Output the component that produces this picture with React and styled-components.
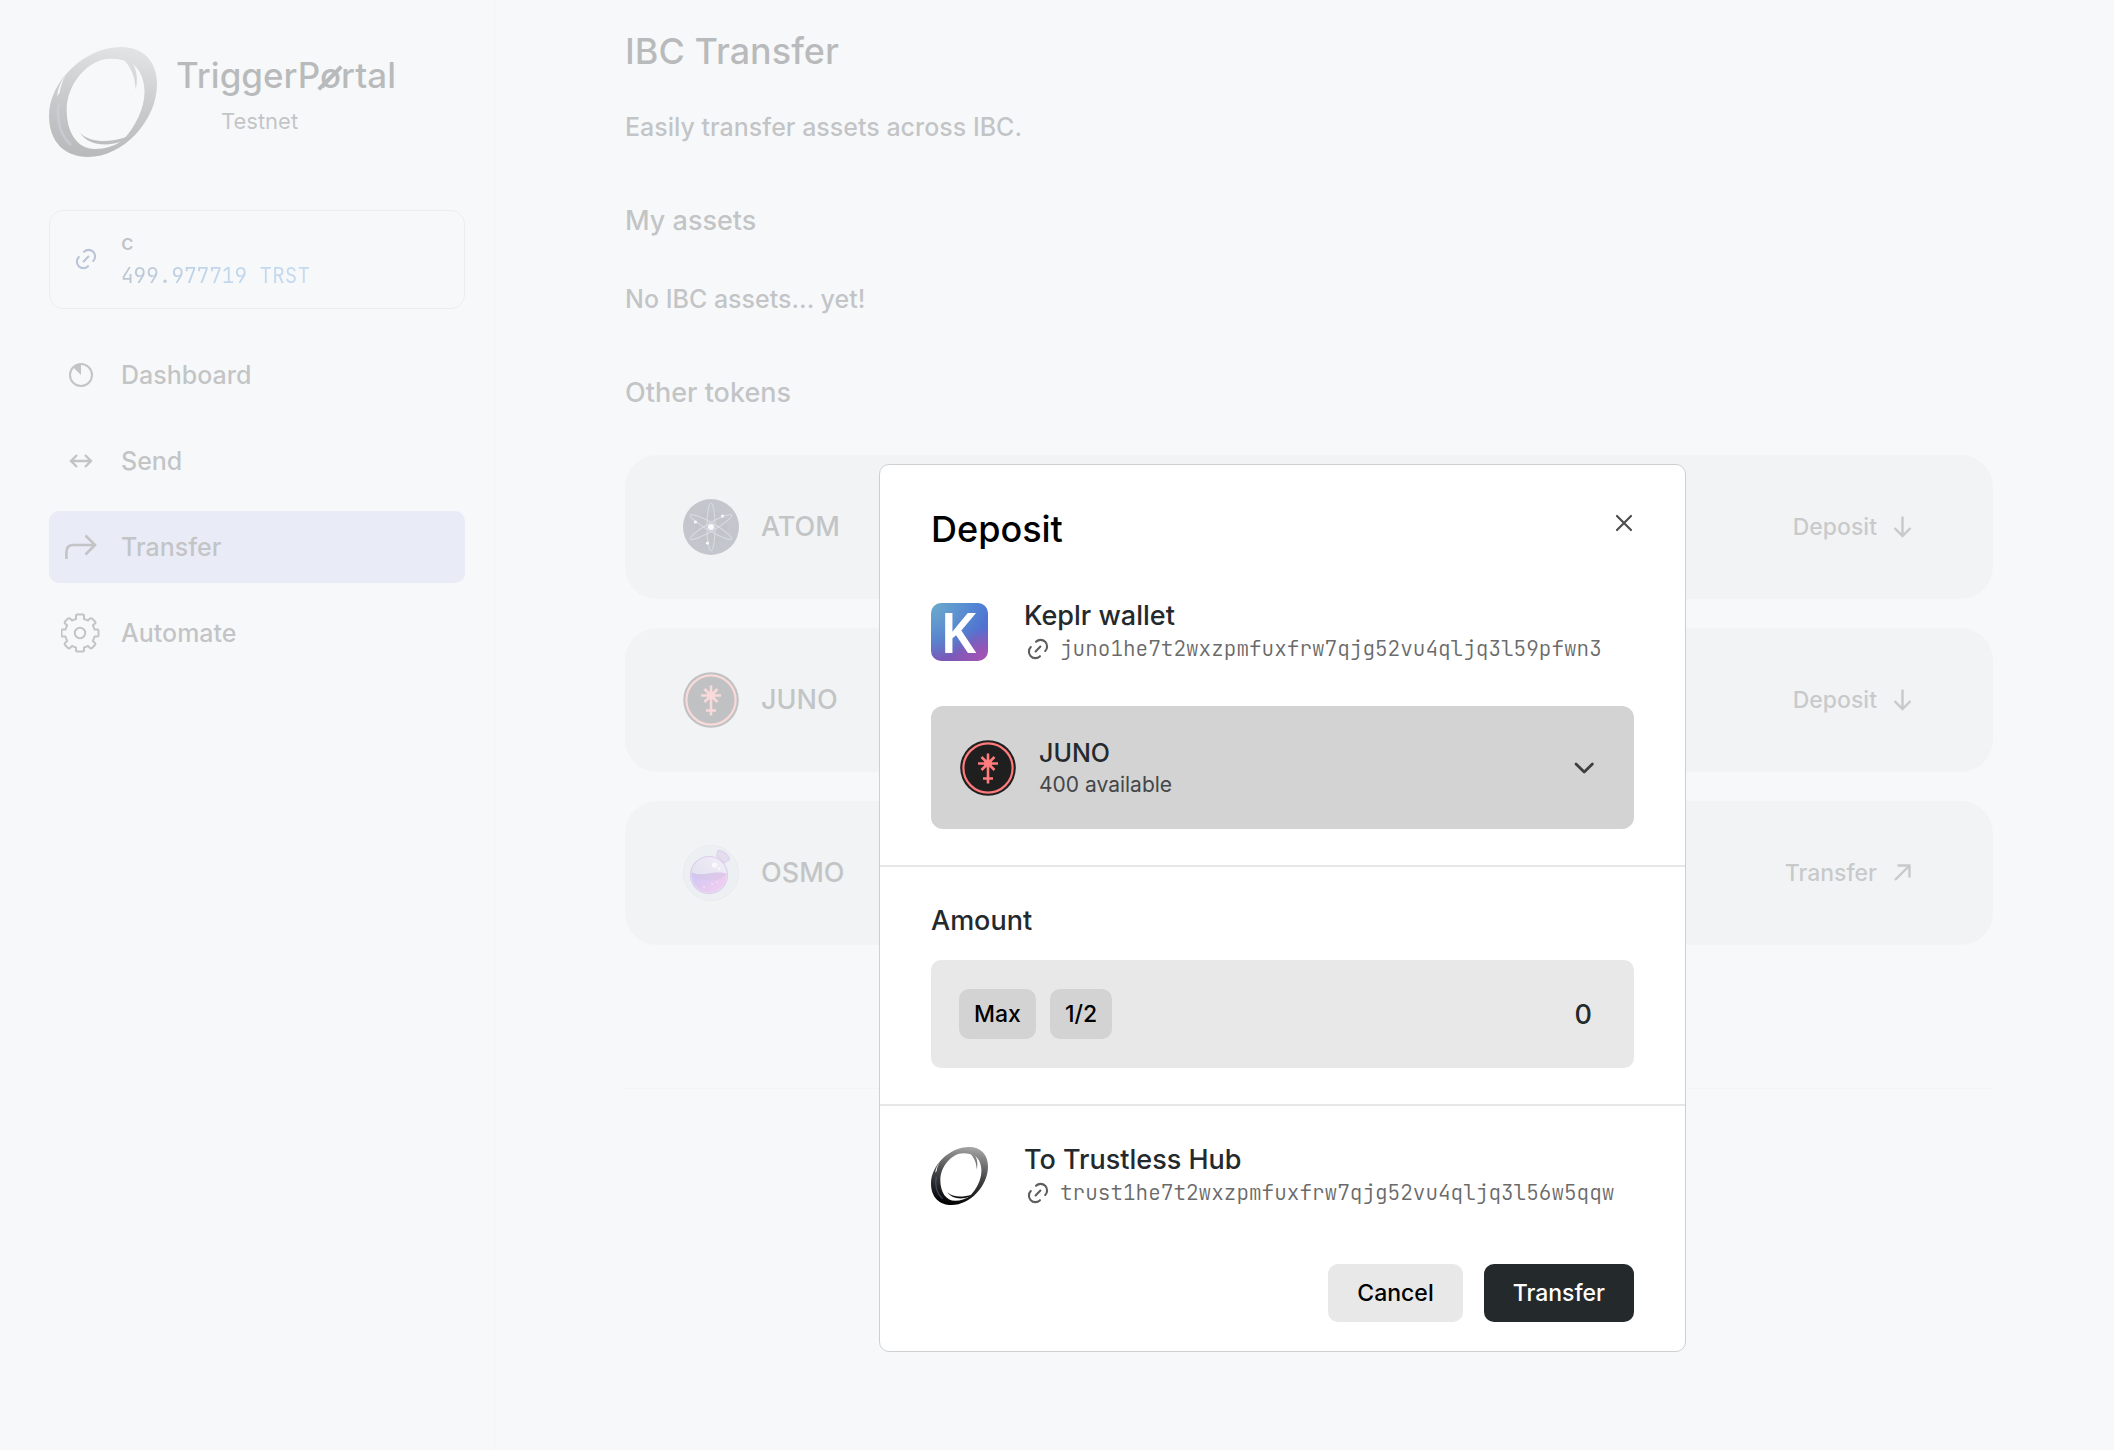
import React, { useState } from 'react';
import styled, { createGlobalStyle } from 'styled-components';

const sans = `Inter, 'Liberation Sans', sans-serif`;
const mono = `'JetBrains Mono', 'Liberation Mono', monospace`;

const GlobalStyle = createGlobalStyle`
  *, *::before, *::after { box-sizing: border-box; }
  body {
    margin: 0;
    background: #f7f8fa;
    color: #24292d;
    font-family: ${sans};
  }
  h1, h2, p { margin: 0; }
  button, input, select { font-family: inherit; color: inherit; }
`;

const Page = styled.div`
  display: flex;
  min-height: 100vh;
`;

const Sidebar = styled.aside`
  flex: none;
  width: 495px;
  padding: 47px 29px 0 49px;
  border-right: 1px solid #e4e5e7;
`;

const Brand = styled.div`
  display: flex;
  gap: 19px;
  margin-bottom: 53px;
`;

const BrandText = styled.div`
  padding-top: 6px;
`;

const BrandName = styled.p`
  font-size: 35px;
  line-height: 44px;
  font-weight: 500;
  color: #000;
`;

const Slashed = styled.span`
  position: relative;

  &::after {
    content: '';
    position: absolute;
    top: 50%;
    left: 50%;
    width: 32px;
    height: 4px;
    margin: 1px 0 0 -16px;
    background: currentColor;
    transform: rotate(-45deg);
  }
`;

const BrandNote = styled.p`
  margin-top: 8px;
  padding-left: 45px;
  font-size: 22px;
  line-height: 32px;
`;

const Account = styled.button`
  display: flex;
  align-items: center;
  width: 100%;
  padding: 14px 24px 15px;
  gap: 23px;
  border: 1px solid #c9cbcd;
  border-radius: 14px;
  background: none;
  text-align: left;
`;

const AccountIcon = styled.span`
  display: flex;
  color: #05286e;
`;

const AccountName = styled.span`
  display: block;
  font-size: 22px;
  line-height: 34px;
  font-weight: 500;
`;

const Balance = styled.span`
  display: block;
  width: max-content;
  font: 400 21px/34px ${mono};
  color: transparent;
  background: linear-gradient(90deg, #0a2f55, #2272c4 50%, #2c80d4);
  background-clip: text;
`;

const Nav = styled.nav`
  display: flex;
  flex-direction: column;
  gap: 14px;
  margin-top: 30px;
`;

const NavLink = styled.a`
  display: flex;
  align-items: center;
  gap: 8px;
  height: 72px;
  border-radius: 10px;
  background: ${(p) => (p.$active ? '#bfc1eb' : 'transparent')};
  color: inherit;
  font-size: 25px;
  font-weight: 500;
  text-decoration: none;
`;

const NavIcon = styled.span`
  display: flex;
  justify-content: center;
  width: 64px;
`;

const Main = styled.main`
  flex: 1;
  min-width: 0;
  padding: 29px 121px 0 130px;
`;

const Title = styled.h1`
  font-size: 36px;
  line-height: 44px;
  font-weight: 500;
  color: #000;
`;

const Lead = styled.p`
  margin-top: 38px;
  font-size: 25px;
  line-height: 32px;
  font-weight: 500;
`;

const Section = styled.section`
  display: flex;
  flex-direction: column;
  gap: 46px;
  margin-top: 62px;
`;

const SectionTitle = styled.h2`
  font-size: 27px;
  line-height: 32px;
  font-weight: 500;
`;

const Empty = styled.p`
  font-size: 25px;
  line-height: 32px;
  font-weight: 500;
`;

const TokenList = styled.div`
  display: flex;
  flex-direction: column;
  gap: 29px;
`;

const TokenCard = styled.article`
  display: flex;
  align-items: center;
  gap: 22px;
  height: 144px;
  padding: 0 79px 0 58px;
  border-radius: 32px;
  background: #e0e2e3;
`;

const TokenName = styled.span`
  flex: 1;
  font-size: 27px;
  line-height: 32px;
  font-weight: 500;
`;

const TokenAction = styled.button`
  display: flex;
  align-items: center;
  gap: 13px;
  padding: 0;
  border: 0;
  background: none;
  color: #3c3e42;
  font-size: 23px;
  line-height: 32px;
  font-weight: 500;
`;

const Rule = styled.hr`
  height: 1px;
  margin: 143px 0 0;
  border: 0;
  background: #e2e3e5;
`;

const Overlay = styled.div`
  position: fixed;
  inset: 0;
  display: flex;
  justify-content: center;
  align-items: flex-start;
  padding: 464px 0 0 451px;
  background: rgba(247, 248, 250, 0.75);
`;

const Dialog = styled.section`
  width: 807px;
  border: 1px solid #cdd0d2;
  border-radius: 10px;
  background: #fff;
`;

const Part = styled.div`
  padding: ${(p) => p.$pad};
  border-bottom: ${(p) => (p.$last ? '0' : '2px solid #e7e7e7')};
`;

const DialogHead = styled.header`
  display: flex;
  justify-content: space-between;
  align-items: flex-start;
  margin-bottom: 48px;
`;

const CloseButton = styled.button`
  display: flex;
  padding: 6px 0;
  border: 0;
  background: none;
`;

const Party = styled.div`
  display: flex;
  align-items: center;
  gap: 36px;
`;

const PartyName = styled.p`
  font-size: 27px;
  line-height: 34px;
  font-weight: 500;
`;

const Address = styled.p`
  display: flex;
  align-items: center;
  gap: 10px;
  padding-left: 2px;
  font: 300 21px/32px ${mono};
  color: #6a6a6a;
`;

const AddressIcon = styled.span`
  display: flex;
  color: #5c5d5e;
`;

const KeplrBadge = styled.span`
  display: flex;
  justify-content: center;
  align-items: center;
  flex: none;
  width: 57px;
  height: 58px;
  padding: 0 3px 3px 0;
  border-radius: 10px;
  background:
    radial-gradient(circle at 100% 105%, #ab52b3, rgba(168, 82, 180, 0) 45%),
    radial-gradient(circle at 0 0, #6cabcb, rgba(108, 171, 203, 0) 70%),
    linear-gradient(170deg, #4c7ad6 15%, #5070cf 55%, #7c59b8 85%);
  color: #fff;
  font: 600 56px/56px 'Noto Sans', ${sans};
`;

const AssetPicker = styled.label`
  display: flex;
  align-items: center;
  gap: 23px;
  height: 123px;
  margin-top: 41px;
  padding: 0 38px 0 29px;
  border-radius: 12px;
  background: #d3d3d3;
`;

const AssetText = styled.span`
  flex: 1;
  padding-top: 2px;
`;

const AssetSelect = styled.select`
  display: block;
  width: 100%;
  padding: 0;
  border: 0;
  appearance: none;
  background: none;
  font-size: 25px;
  line-height: 32px;
  font-weight: 500;
`;

const AssetNote = styled.span`
  display: block;
  font-size: 21px;
  line-height: 32px;
  color: #444648;
`;

const AmountLabel = styled.label`
  display: block;
  font-size: 27px;
  line-height: 32px;
  font-weight: 500;
`;

const AmountBox = styled.div`
  display: flex;
  align-items: center;
  gap: 14px;
  height: 108px;
  margin-top: 23px;
  padding: 0 42px 0 28px;
  border-radius: 10px;
  background: #e8e8e8;
`;

const Button = styled.button`
  padding: ${(p) => (p.$small ? '0 15px' : '0 29px')};
  height: ${(p) => (p.$small ? '50px' : '58px')};
  border: 0;
  border-radius: 10px;
  background: ${(p) => (p.$primary ? '#24292c' : p.$small ? '#d3d3d3' : '#e8e8e8')};
  color: ${(p) => (p.$primary ? '#fff' : '#000')};
  font-size: 23px;
  font-weight: 500;
`;

const AmountInput = styled.input`
  flex: 1;
  min-width: 0;
  padding: 0;
  border: 0;
  outline: 0;
  background: none;
  text-align: right;
  font-size: 27px;
  font-weight: 500;
`;

const Actions = styled.footer`
  display: flex;
  justify-content: flex-end;
  gap: 21px;
  margin-top: 55px;
`;

const Drawing = styled.svg`
  display: block;
  flex: none;
`;

function RingLogo({ width, height, id }) {
  return (
    <Drawing width={width} height={height} viewBox="0 0 108 110" preserveAspectRatio="none" aria-hidden="true">
      <defs>
        <linearGradient id={id} gradientUnits="userSpaceOnUse" x1="62" y1="0" x2="44" y2="110">
          <stop offset="0" stopColor="#a2a2a2" />
          <stop offset="0.45" stopColor="#4a4b4d" />
          <stop offset="1" stopColor="#000" />
        </linearGradient>
      </defs>
      <path
        fill={`url(#${id})`}
        fillRule="evenodd"
        d="M72 0C94 0 108 14 108 37C108 74 74 110 39 110C15 110 0 94 0 69C0 34 36 0 72 0Z M61 11.700C70 11.700 77 13.500 83 16.500C91 22 95.500 33 95.500 45C95.500 62 86 80 74 93C66 99 56 102 46 102C28 102 17.700 85 17.700 63C17.700 36 40 11.700 61 11.700Z M17 28C12 34 9 41 8 49L10.500 46C11.500 39 14 33 17 28Z"
      />
      <path fill={`url(#${id})`} d="M77 12L83.500 16C88 23 89 33 86.700 42.500C86.300 34 84.500 24 76 14Z" />
      <path fill={`url(#${id})`} d="M31 86C42 96 60 96 77 90L74 94C58 100 40 99 31 86Z" />
      <path d="M10 56C7 72 11 88 22 98" fill="none" stroke="#5a6290" strokeWidth="2.500" opacity="0.6" />
    </Drawing>
  );
}

function LinkIcon() {
  return (
    <Drawing width="24" height="22" viewBox="-1 0 23 21" fill="none" stroke="currentColor" strokeWidth="2" strokeLinecap="round" aria-hidden="true">
      <path d="M8.600 3.600A6 6 0 1 1 17.400 12.400" />
      <path d="M12.400 17.400A6 6 0 1 1 3.600 8.600" />
      <path d="M8.200 12.800L12.800 8.200" />
    </Drawing>
  );
}

function DashboardIcon() {
  return (
    <Drawing width="24" height="24" viewBox="0 0 24 24" aria-hidden="true">
      <circle cx="12" cy="12" r="11" fill="none" stroke="currentColor" strokeWidth="2" />
      <path d="M12 1V12L4 4.200C6 2 9 1 12 1Z" fill="currentColor" />
    </Drawing>
  );
}

function SendIcon() {
  return (
    <Drawing width="24" height="16" viewBox="0 0 24 16" fill="none" stroke="currentColor" strokeWidth="2.400" aria-hidden="true">
      <path d="M2 8H22M8 2L2 8L8 14M16 2L22 8L16 14" />
    </Drawing>
  );
}

function TransferIcon() {
  return (
    <Drawing width="34" height="26" viewBox="0 0 34 26" fill="none" stroke="currentColor" strokeWidth="2.600" aria-hidden="true">
      <path d="M2.400 25V18C2.400 13.500 5 11 9.500 11H31M21.500 1.500L31 11L21.500 20.500" />
    </Drawing>
  );
}

function GearIcon() {
  return (
    <Drawing width="40" height="40" viewBox="1 0 40 40" fill="none" stroke="currentColor" strokeWidth="2" strokeLinejoin="round" aria-hidden="true">
      <circle cx="20" cy="20" r="5.200" />
      <path d="M17 1.500H23Q24 1.500 24 2.500V6Q26 6.500 28 7.500L30 5.500Q31 4.800 32 5.500L35 8.500Q36 9.500 35 10.500L32.800 12.500Q34 14.500 34.500 16.500H37.500Q38.500 16.500 38.500 17.500V22.500Q38.500 23.500 37.500 23.500H34.500Q34 26 32.800 28L35 30Q35.800 31 35 32L32 35Q31 35.800 30 35L28 32.800Q26 34 24 34.500V37.500Q24 38.500 23 38.500H17Q16 38.500 16 37.500V34.500Q14 34 12 32.800L10 35Q9 35.800 8 35L5 32Q4.200 31 5 30L7.200 28Q6 26 5.500 23.500H2.500Q1.500 23.500 1.500 22.500V17.500Q1.500 16.500 2.500 16.500H5.500Q6 14.500 7.200 12.500L5 10.500Q4.200 9.500 5 8.500L8 5.500Q9 4.800 10 5.500L12 7.500Q14 6.500 16 6V2.500Q16 1.500 17 1.500Z" />
    </Drawing>
  );
}

function ArrowIcon({ up }) {
  return (
    <Drawing width="24" height="24" viewBox="0 0 24 24" fill="none" stroke="currentColor" strokeWidth="2.400" aria-hidden="true">
      {up ? <path d="M5 19L19.500 4.500M7.500 4.500H19.500V16.500" /> : <path d="M12.500 1.500V21M4.500 13L12.500 21L20.500 13" />}
    </Drawing>
  );
}

function CloseIcon() {
  return (
    <Drawing width="20" height="20" viewBox="0 0 20 20" fill="none" stroke="#4c4e50" strokeWidth="2.200" strokeLinecap="round" aria-hidden="true">
      <path d="M3 3L17 17M17 3L3 17" />
    </Drawing>
  );
}

function ChevronIcon() {
  return (
    <Drawing width="24" height="24" viewBox="0 0 24 24" fill="none" stroke="#3c3e40" strokeWidth="2.800" strokeLinecap="round" strokeLinejoin="round" aria-hidden="true">
      <path d="M4 8L12.200 16L20.400 8" />
    </Drawing>
  );
}

function JunoIcon() {
  return (
    <Drawing width="56" height="56" viewBox="0 0 56 56" aria-hidden="true">
      <circle cx="28" cy="28" r="27.800" fill="#1f1f1f" />
      <circle cx="28" cy="28" r="24.600" fill="none" stroke="#ff7b7c" strokeWidth="2.200" />
      <g stroke="#ff7b7c" strokeWidth="2.600">
        <path d="M28 13.500V43.500M18 23.500H38M21.500 17L34.500 30M34.500 17L21.500 30M23 38.500H33" />
      </g>
      <circle cx="28" cy="23.500" r="4" fill="#ff7b7c" />
    </Drawing>
  );
}

function AtomIcon() {
  return (
    <Drawing width="56" height="56" viewBox="0 0 56 56" aria-hidden="true">
      <circle cx="28" cy="28" r="28" fill="#2e3148" />
      <circle cx="28" cy="28" r="16" fill="#272a3e" />
      <g fill="none" stroke="#8488a6" strokeWidth="1">
        <ellipse cx="28" cy="28" rx="4" ry="24" />
        <ellipse cx="28" cy="28" rx="4" ry="24" transform="rotate(60 28 28)" />
        <ellipse cx="28" cy="28" rx="4" ry="24" transform="rotate(120 28 28)" />
      </g>
      <g fill="#fff">
        <circle cx="28" cy="28" r="3" />
        <circle cx="12.500" cy="23" r="1.600" />
        <circle cx="39.500" cy="17" r="1.600" />
        <circle cx="24.500" cy="44" r="1.600" />
      </g>
    </Drawing>
  );
}

function OsmoIcon() {
  return (
    <Drawing width="56" height="56" viewBox="0 0 56 56" aria-hidden="true">
      <defs>
        <linearGradient id="osmoLiquid" x1="0" y1="0.2" x2="1" y2="0.7">
          <stop offset="0" stopColor="#5a3be0" />
          <stop offset="1" stopColor="#f04cd2" />
        </linearGradient>
        <linearGradient id="osmoGlass" x1="0" y1="1" x2="1" y2="0">
          <stop offset="0" stopColor="#9a86c4" />
          <stop offset="1" stopColor="#e0d4f2" />
        </linearGradient>
      </defs>
      <circle cx="28" cy="28" r="27.500" fill="#cbd7de" stroke="#b8c2c8" />
      <path d="M34 11.500L34.500 7.500Q34 5 37 5.500Q43 7 46 12.500Q47.500 15.500 44.500 15.500L41.500 18Z" fill="#a78ccc" stroke="#8f5fc8" strokeWidth="1.200" />
      <circle cx="26" cy="30" r="18.500" fill="url(#osmoGlass)" stroke="#8a4cc4" strokeWidth="1.200" />
      <path d="M8.500 27.500C15 30 20 29.500 26 28.500C32 27 38 27 43.500 28.500C44 39 36 47.500 26 47.500C16 47.500 8 39 8.500 27.500Z" fill="url(#osmoLiquid)" />
      <path d="M8.500 27.500C15 30 20 29.500 26 28.500C32 27 38 27 43.500 28.500C40 35 30 36 22 35C15 34 10 33 8.500 27.500Z" fill="#6a2fa0" opacity="0.5" />
      <circle cx="31.500" cy="20" r="2.600" fill="#fff" />
      <circle cx="36" cy="23.500" r="1.200" fill="#fff" />
      <g fill="#fff" opacity="0.8">
        <circle cx="29" cy="39" r="0.800" />
        <circle cx="34" cy="37" r="0.800" />
        <circle cx="21" cy="42" r="0.800" />
      </g>
    </Drawing>
  );
}

const navItems = [
  { label: 'Dashboard', icon: <DashboardIcon /> },
  { label: 'Send', icon: <SendIcon /> },
  { label: 'Transfer', icon: <TransferIcon />, active: true },
  { label: 'Automate', icon: <GearIcon /> },
];

const tokens = [
  { name: 'ATOM', icon: <AtomIcon />, action: 'Deposit' },
  { name: 'JUNO', icon: <JunoIcon />, action: 'Deposit' },
  { name: 'OSMO', icon: <OsmoIcon />, action: 'Transfer' },
];

function DepositDialog() {
  const [amount, setAmount] = useState('0');
  return (
    <Overlay>
      <Dialog role="dialog" aria-modal="true" aria-labelledby="deposit-title">
        <Part $pad="42px 51px 36px">
          <DialogHead>
            <Title as="h2" id="deposit-title">Deposit</Title>
            <CloseButton type="button" aria-label="Close"><CloseIcon /></CloseButton>
          </DialogHead>
          <Party>
            <KeplrBadge aria-hidden="true">K</KeplrBadge>
            <div>
              <PartyName>Keplr wallet</PartyName>
              <Address>
                <AddressIcon><LinkIcon /></AddressIcon>
                juno1he7t2wxzpmfuxfrw7qjg52vu4qljq3l59pfwn3
              </Address>
            </div>
          </Party>
          <AssetPicker>
            <JunoIcon />
            <AssetText>
              <AssetSelect aria-label="Asset" defaultValue="JUNO">
                <option>JUNO</option>
              </AssetSelect>
              <AssetNote>400 available</AssetNote>
            </AssetText>
            <ChevronIcon />
          </AssetPicker>
        </Part>
        <Part $pad="38px 51px 36px">
          <AmountLabel htmlFor="amount">Amount</AmountLabel>
          <AmountBox>
            <Button type="button" $small onClick={() => setAmount('400')}>Max</Button>
            <Button type="button" $small onClick={() => setAmount('200')}>1/2</Button>
            <AmountInput id="amount" value={amount} onChange={(e) => setAmount(e.target.value)} />
          </AmountBox>
        </Part>
        <Part $pad="37px 51px 29px" $last>
          <Party>
            <RingLogo id="ringSmall" width={57} height={58} />
            <div>
              <PartyName>To Trustless Hub</PartyName>
              <Address>
                <AddressIcon><LinkIcon /></AddressIcon>
                trust1he7t2wxzpmfuxfrw7qjg52vu4qljq3l56w5qqw
              </Address>
            </div>
          </Party>
          <Actions>
            <Button type="button">Cancel</Button>
            <Button type="button" $primary>Transfer</Button>
          </Actions>
        </Part>
      </Dialog>
    </Overlay>
  );
}

export default function App() {
  return (
    <>
      <GlobalStyle />
      <Page>
        <Sidebar>
          <Brand>
            <RingLogo id="ringLarge" width={108} height={110} />
            <BrandText>
              <BrandName>TriggerP<Slashed>ø</Slashed>rtal</BrandName>
              <BrandNote>Testnet</BrandNote>
            </BrandText>
          </Brand>
          <Account type="button">
            <AccountIcon><LinkIcon /></AccountIcon>
            <span>
              <AccountName>c</AccountName>
              <Balance>499.977719 TRST</Balance>
            </span>
          </Account>
          <Nav>
            {navItems.map((item) => (
              <NavLink key={item.label} href="#" $active={item.active}>
                <NavIcon>{item.icon}</NavIcon>
                {item.label}
              </NavLink>
            ))}
          </Nav>
        </Sidebar>
        <Main>
          <Title>IBC Transfer</Title>
          <Lead>Easily transfer assets across IBC.</Lead>
          <Section>
            <SectionTitle>My assets</SectionTitle>
            <Empty>No IBC assets... yet!</Empty>
          </Section>
          <Section>
            <SectionTitle>Other tokens</SectionTitle>
            <TokenList>
              {tokens.map((token) => (
                <TokenCard key={token.name}>
                  {token.icon}
                  <TokenName>{token.name}</TokenName>
                  <TokenAction type="button">
                    {token.action}
                    <ArrowIcon up={token.action === 'Transfer'} />
                  </TokenAction>
                </TokenCard>
              ))}
            </TokenList>
          </Section>
          <Rule />
        </Main>
      </Page>
      <DepositDialog />
    </>
  );
}
